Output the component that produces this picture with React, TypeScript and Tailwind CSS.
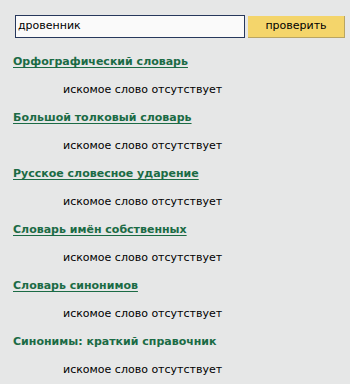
export default function App() {
  const dicts = [
    { title: "Орфографический словарь", link: true },
    { title: "Большой толковый словарь", link: true },
    { title: "Русское словесное ударение", link: true },
    { title: "Словарь имён собственных", link: true },
    { title: "Словарь синонимов", link: true },
    { title: "Синонимы: краткий справочник", link: false },
  ];

  return (
    <div className="w-[350px] h-[384px] bg-[#e6e7e7] overflow-hidden" style={{ fontFamily: '"DejaVu Sans", Verdana, sans-serif' }}>
      <div className="flex items-center pt-[15px] pl-[15px] gap-[3px]">
        <div className="w-[230px] h-[23px] border border-[#27385c] bg-[#fafafa] flex items-center pl-[2px] text-[11px] text-black">
          дровенник
        </div>
        <button className="w-[97px] h-[22px] bg-[#f4d56b] border-b border-r border-[#b9a562] text-[11px] text-black">
          проверить
        </button>
      </div>

      <div className="pl-[13px] pt-[16px]">
        {dicts.map((d) => (
          <div key={d.title} className="h-[56px]">
            <div
              className={`text-[11px] font-bold text-[#1b6b45] leading-[16px] ${d.link ? "underline underline-offset-2" : ""}`}
            >
              {d.title}
            </div>
            <div className="pl-[50px] pt-[13px] text-[11px] text-black leading-[14px]">
              искомое слово отсутствует
            </div>
          </div>
        ))}
      </div>
    </div>
  );
}
